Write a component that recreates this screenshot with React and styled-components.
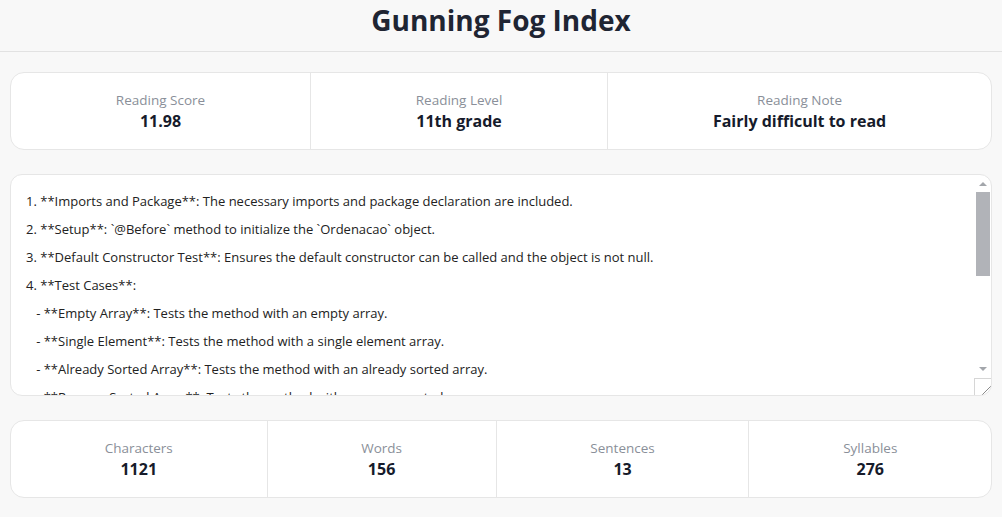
import styled, { createGlobalStyle } from 'styled-components';

const sampleText = `1. **Imports and Package**: The necessary imports and package declaration are included.
2. **Setup**: \`@Before\` method to initialize the \`Ordenacao\` object.
3. **Default Constructor Test**: Ensures the default constructor can be called and the object is not null.
4. **Test Cases**:
   - **Empty Array**: Tests the method with an empty array.
   - **Single Element**: Tests the method with a single element array.
   - **Already Sorted Array**: Tests the method with an already sorted array.
   - **Reverse Sorted Array**: Tests the method with a reverse sorted array.
   - **Unsorted Array**: Tests the method with an unsorted array.
   - **Array with Duplicates**: Tests the method with an array containing duplicate values.
   - **Negative Numbers**: Tests the method with an array containing negative numbers.
5. **Assertions**: Each test uses \`assertArrayEquals\` to compare the sorted result with the expected array.
6. **Coverage**: These tests cover the main branches of the sorting logic.
This should give you full coverage of the \`Ordenacao\` class.`;

const readingStats = [
  { label: 'Reading Score', value: '11.98' },
  { label: 'Reading Level', value: '11th grade' },
  { label: 'Reading Note', value: 'Fairly difficult to read' },
];

const textStats = [
  { label: 'Characters', value: '1121' },
  { label: 'Words', value: '156' },
  { label: 'Sentences', value: '13' },
  { label: 'Syllables', value: '276' },
];

export default function App() {
  return (
    <>
      <GlobalStyle />
      <Header>
        <Title>Gunning Fog Index</Title>
      </Header>
      <Main>
        <StatsCard>
          {readingStats.map((s) => (
            <Stat key={s.label}>
              <StatLabel>{s.label}</StatLabel>
              <StatValue>{s.value}</StatValue>
            </Stat>
          ))}
        </StatsCard>
        <TextBox>
          <TextInput defaultValue={sampleText} spellCheck={false} />
          <ScrollColumn>
            <ScrollButton $dir="up" />
            <ScrollTrack>
              <ScrollThumb style={{ height: 84 }} />
            </ScrollTrack>
            <ScrollButton $dir="down" />
            <Resizer />
          </ScrollColumn>
        </TextBox>
        <StatsCard>
          {textStats.map((s) => (
            <Stat key={s.label}>
              <StatLabel>{s.label}</StatLabel>
              <StatValue>{s.value}</StatValue>
            </Stat>
          ))}
        </StatsCard>
      </Main>
    </>
  );
}

const GlobalStyle = createGlobalStyle`
  * {
    box-sizing: border-box;
  }
  body {
    margin: 0;
    background: #f8f8f8;
    font-family: 'Open Sans', 'Noto Sans', sans-serif;
    color: #212529;
  }
`;

const Header = styled.header`
  height: 52px;
  border-bottom: 1px solid #e2e2e2;
  display: flex;
  justify-content: center;
`;

const Title = styled.h1`
  margin: 0;
  font-size: 28px;
  line-height: 40px;
  font-weight: 700;
  color: #1f2533;
`;

const Main = styled.main`
  padding: 20px 10px;
  display: flex;
  flex-direction: column;
  gap: 24px;
`;

const StatsCard = styled.section`
  display: flex;
  background: #fff;
  border: 1px solid #e6e6e6;
  border-radius: 14px;
  height: 78px;
`;

const Stat = styled.div`
  flex: 1 1 auto;
  display: flex;
  flex-direction: column;
  align-items: center;
  justify-content: center;
  padding: 0 16px;
  & + & {
    border-left: 1px solid #e6e6e6;
  }
`;

const StatLabel = styled.span`
  font-size: 13.5px;
  line-height: 20px;
  color: #8a8f99;
`;

const StatValue = styled.span`
  font-size: 16px;
  line-height: 22px;
  font-weight: 700;
  color: #161b2b;
`;

const TextBox = styled.div`
  display: flex;
  height: 222px;
  background: #fff;
  border: 1px solid #e6e6e6;
  border-radius: 12px;
  overflow: hidden;
`;

const TextInput = styled.textarea`
  flex: 1;
  min-width: 0;
  padding: 12px 15px;
  border: none;
  background: transparent;
  font-family: 'Open Sans', 'Noto Sans', sans-serif;
  font-size: 13px;
  line-height: 28px;
  color: #222;
  white-space: pre-wrap;
  overflow-y: auto;
  resize: none;
  outline: none;
`;

const arrow = '#a3a6ab';

const ScrollColumn = styled.div`
  width: 17px;
  display: flex;
  flex-direction: column;
`;

const ScrollButton = styled.div`
  height: 17px;
  flex: none;
  display: flex;
  align-items: center;
  justify-content: center;
  &::before {
    content: '';
    width: 0;
    height: 0;
    border-left: 4px solid transparent;
    border-right: 4px solid transparent;
    ${(p) =>
      p.$dir === 'up'
        ? `border-bottom: 4px solid ${arrow}; margin-top: 1px;`
        : `border-top: 4px solid ${arrow}; margin-bottom: 1px;`}
  }
`;

const ScrollTrack = styled.div`
  flex: 1;
  padding: 0 1px 0 2px;
`;

const ScrollThumb = styled.div`
  background: #b1b3b8;
`;

const Resizer = styled.div`
  height: 17px;
  flex: none;
  border-left: 1px solid #d6d6d6;
  border-top: 1px solid #d6d6d6;
  background: linear-gradient(
    to bottom right,
    transparent 71%,
    #8a8a8a 71% 75%,
    transparent 75% 85%,
    #8a8a8a 85% 89%,
    transparent 89%
  );
`;
